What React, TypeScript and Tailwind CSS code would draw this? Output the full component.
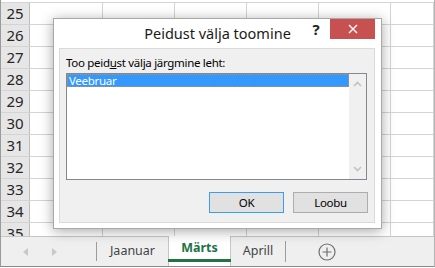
import React from 'react';

const rows = [25, 26, 27, 28, 29, 30, 31, 32, 33, 34, 35];

function GridRow({ n }: { n: number }) {
  return (
    <div className="flex h-[22px] shrink-0 border-t border-[#d4d4d4]">
      <div className="w-[29px] shrink-0 bg-[#e6e6e6] border-r border-[#bdbdbd] flex items-center justify-center text-[15px] text-[#262626] leading-none">
        {n}
      </div>
      <div className="w-[73px] shrink-0 border-r border-[#d4d4d4]" />
      <div className="w-[72px] shrink-0 border-r border-[#d4d4d4]" />
      <div className="w-[72px] shrink-0 border-r border-[#d4d4d4]" />
      <div className="w-[72px] shrink-0 border-r border-[#d4d4d4]" />
      <div className="w-[72px] shrink-0 border-r border-[#d4d4d4]" />
      <div className="w-[43px] shrink-0 border-r border-[#d4d4d4]" />
    </div>
  );
}

function Chevron({ up }: { up?: boolean }) {
  return (
    <svg width="9" height="6" viewBox="0 0 9 6">
      <path
        d={up ? 'M1 5 L4.5 1.5 L8 5' : 'M1 1 L4.5 4.5 L8 1'}
        fill="none"
        stroke="#c2c2c2"
        strokeWidth="1.6"
      />
    </svg>
  );
}

function Dialog() {
  return (
    <div className="absolute left-[52px] top-[18px] w-[329px] h-[211px] bg-white border border-[#a9a9a9] shadow-[0_2px_12px_rgba(0,0,0,0.35)] flex flex-col">
      {/* title bar */}
      <div className="h-[29px] shrink-0 flex items-start">
        <div className="w-[79px] shrink-0" />
        <div className="flex-1 text-center text-[14.5px] leading-[29px] text-[#1a1a1a]">Peidust välja toomine</div>
        <div className="w-[28px] h-[20px] shrink-0 flex items-center justify-center text-[15px] font-bold text-[#222]">?</div>
        <div className="w-[45px] h-[20px] shrink-0 bg-[#c75050] flex items-center justify-center">
          <svg width="10" height="10" viewBox="0 0 10 10">
            <path d="M1 1 L9 9 M9 1 L1 9" stroke="#fff" strokeWidth="1.4" />
          </svg>
        </div>
        <div className="w-[6px] shrink-0" />
      </div>

      {/* body panel */}
      <div className="flex-1 ml-[5px] mr-[6px] mb-[5px] bg-[#f0f0f0] border border-[#dadada] flex flex-col text-[11.5px] tracking-[-0.3px]">
        <div className="pl-[6px] pt-[6px] leading-[16px] text-black">
          Too peid<span className="underline">u</span>st välja järgmine leht:
        </div>
        <div className="ml-[6px] mt-[2px] w-[301px] h-[107px] bg-white border border-[#828790] flex">
          <div className="flex-1">
            <div className="h-[13px] bg-[#3399ff] border border-dotted border-[#c98d55] text-white leading-[11px] pl-[1px]">
              Veebruar
            </div>
          </div>
          <div className="w-[17px] bg-[#f0f0f0] flex flex-col items-center justify-between py-[7px]">
            <Chevron up />
            <Chevron />
          </div>
        </div>
        <div className="mt-[12px] pr-[6px] flex justify-end gap-[9px]">
          <div className="w-[75px] h-[21px] bg-[#e1e1e1] border border-[#3c9cf0] flex items-center justify-center text-black">
            OK
          </div>
          <div className="w-[75px] h-[21px] bg-[#e1e1e1] border border-[#adadad] flex items-center justify-center text-black">
            Loobu
          </div>
        </div>
      </div>
    </div>
  );
}

export default function App() {
  return (
    <div className="w-[435px] h-[267px] relative bg-white overflow-hidden border-l border-r border-b border-l-[#9a9a9a] border-r-[#b4b4b4] border-b-[#8a8a8a] font-['Noto_Sans',sans-serif] flex flex-col">
      {/* sheet grid */}
      <div className="h-[236px] shrink-0 overflow-hidden flex flex-col">
        <div className="h-[2px] shrink-0" />
        {rows.map((n) => (
          <GridRow key={n} n={n} />
        ))}
      </div>

      {/* sheet tabs */}
      <div className="h-[30px] shrink-0 bg-[#efefef] border-t border-[#c6c6c6] flex items-stretch text-[12.5px] text-[#444]">
        <div className="w-[95px] shrink-0 flex items-center">
          <svg className="ml-[22px]" width="5" height="8" viewBox="0 0 5 8">
            <path d="M5 0 L0 4 L5 8 Z" fill="#c8c8c8" />
          </svg>
          <svg className="ml-[24px]" width="5" height="8" viewBox="0 0 5 8">
            <path d="M0 0 L5 4 L0 8 Z" fill="#c8c8c8" />
          </svg>
        </div>
        <div className="w-px shrink-0 bg-[#9c9c9c] my-[5px]" />
        <div className="w-[71px] shrink-0 flex items-center justify-center">Jaanuar</div>
        <div className="w-[63px] shrink-0 -mt-px bg-white border-l border-r border-[#c6c6c6] flex flex-col">
          <div className="flex-1 flex items-center justify-center font-bold text-[#217346] pt-[2px]">Märts</div>
          <div className="h-[3px] bg-[#217346] -mx-px" />
          <div className="h-[4px]" />
        </div>
        <div className="w-[54px] shrink-0 flex items-center justify-center">Aprill</div>
        <div className="w-px shrink-0 bg-[#9c9c9c] my-[4px]" />
        <div className="w-[82px] shrink-0 flex items-center justify-center">
          <svg width="18" height="18" viewBox="0 0 18 18">
            <circle cx="9" cy="9" r="8" fill="none" stroke="#6f6f6f" strokeWidth="1.2" />
            <path d="M9 4.5 V13.5 M4.5 9 H13.5" stroke="#6f6f6f" strokeWidth="1.2" />
          </svg>
        </div>
      </div>

      <Dialog />
    </div>
  );
}
